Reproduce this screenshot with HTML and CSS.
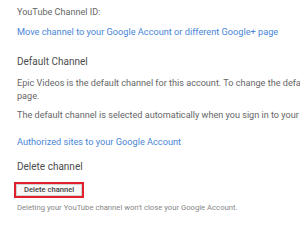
FILE: index.html
```html
<!DOCTYPE html>
<html lang="en">
<head>
    <meta charset="UTF-8">
    <title>Advanced account settings</title>
    <link rel="stylesheet" href="styles.css">
</head>
<body>
    <div class="settings">
        <!-- Channel ID -->
        <div class="section">
            <p class="label">YouTube Channel ID:</p>
            <a class="link move-link" href="#">Move channel to your Google Account or different Google+ page</a>
        </div>

        <!-- Default channel -->
        <div class="section">
            <h2 class="section-title">Default Channel</h2>
            <p class="text">Epic Videos is the default channel for this account. To change the default channel, go to your account settings<br>page.</p>
            <p class="text">The default channel is selected automatically when you sign in to your Google Account.</p>
            <a class="link auth-link" href="#">Authorized sites to your Google Account</a>
        </div>

        <!-- Delete -->
        <div class="section">
            <h2 class="section-title">Delete channel</h2>
            <div class="delete-wrap">
                <button class="delete-btn">Delete channel</button>
            </div>
            <p class="note">Deleting your YouTube channel won't close your Google Account.</p>
        </div>
    </div>
</body>
</html>
```

FILE: styles.css
```css
* {
    margin: 0;
    padding: 0;
    box-sizing: border-box;
}

body {
    font-family: Roboto, 'Noto Sans', sans-serif;
    background: #ffffff;
    color: #666666;
    overflow: hidden;
}

.settings {
    padding: 6px 0 0 17px;
    width: 700px;
    white-space: nowrap;
}

.label,
.text {
    font-size: 9.1px;
    line-height: 13px;
}

.label {
    margin-bottom: 6px;
}

.link {
    display: block;
    width: max-content;
    font-size: 9.2px;
    line-height: 13px;
    color: #4a86d8;
    text-decoration: none;
}

.move-link {
    margin-bottom: 17px;
}

.section-title {
    font-size: 10px;
    font-weight: 400;
    line-height: 14px;
    color: #4d4d4d;
    margin-bottom: 8px;
}

.text {
    margin-bottom: 6px;
}

.auth-link {
    margin-top: 13px;
    margin-bottom: 12px;
}

.delete-wrap {
    width: max-content;
    margin: 2px 0 0 -3px;
    border: 2px solid #e0202c;
}

.delete-btn {
    display: block;
    font-family: Roboto, 'Noto Sans', sans-serif;
    font-size: 7.6px;
    font-weight: 500;
    color: #444444;
    background: #f8f8f8;
    border: 1px solid #d3d3d3;
    padding: 0 7px;
    height: 12px;
    line-height: 10px;
}

.note {
    font-size: 7.7px;
    line-height: 10px;
    color: #888888;
    margin-top: 5px;
}
```
